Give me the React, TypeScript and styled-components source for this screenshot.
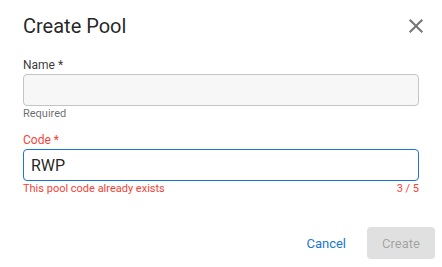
import React from "react";
import styled, { createGlobalStyle } from "styled-components";

const Global = createGlobalStyle`
  html, body { margin: 0; padding: 0; background: #ffffff; }
  body { font-family: Roboto, "Liberation Sans", Arial, sans-serif; }
  * { box-sizing: border-box; }
`;

const Dialog = styled.div`
  width: 442px;
  height: 267px;
  display: flex;
  flex-direction: column;
  background: #ffffff;
`;

const Header = styled.div`
  display: flex;
  align-items: center;
  justify-content: space-between;
  padding: 14px 14px 0 23px;
`;

const Title = styled.h2`
  margin: 0;
  font-size: 20px;
  line-height: 24px;
  font-weight: 400;
  color: rgba(0, 0, 0, 0.87);
`;

const CloseButton = styled.button`
  width: 24px;
  height: 24px;
  padding: 0;
  border: none;
  background: none;
  display: flex;
  align-items: center;
  justify-content: center;
  color: #757575;
  cursor: pointer;
`;

const Body = styled.div`
  display: flex;
  flex-direction: column;
  padding: 19px 23px 0 23px;
`;

const Field = styled.div<{ $gap?: number }>`
  display: flex;
  flex-direction: column;
  margin-top: ${(p) => p.$gap ?? 0}px;
`;

const Label = styled.label<{ $error?: boolean }>`
  font-size: 12px;
  line-height: 16px;
  color: ${(p) => (p.$error ? "#f44336" : "rgba(0,0,0,0.8)")};
  margin-bottom: 1px;
`;

const Input = styled.div<{ $focused?: boolean }>`
  height: 32px;
  border-radius: 4px;
  border: ${(p) => (p.$focused ? "1.5px solid #1976d2" : "1px solid #c4c4c4")};
  background: ${(p) => (p.$focused ? "#ffffff" : "#f7f7f7")};
  display: flex;
  align-items: center;
  padding: 0 7px;
  font-size: 16px;
  color: rgba(0, 0, 0, 0.87);
`;

const HelperRow = styled.div<{ $error?: boolean }>`
  display: flex;
  justify-content: space-between;
  font-size: 11px;
  line-height: 14px;
  margin-top: 1px;
  color: ${(p) => (p.$error ? "#f44336" : "rgba(0,0,0,0.6)")};
`;

const Footer = styled.div`
  margin-top: auto;
  display: flex;
  justify-content: flex-end;
  align-items: center;
  gap: 21px;
  padding: 0 7px 8px 0;
`;

const TextButton = styled.button`
  border: none;
  background: none;
  padding: 0;
  font-family: inherit;
  font-size: 13px;
  color: #1976d2;
  cursor: pointer;
`;

const SolidButton = styled.button`
  width: 68px;
  height: 32px;
  border: none;
  border-radius: 4px;
  background: #e0e0e0;
  color: rgba(0, 0, 0, 0.3);
  font-family: inherit;
  font-size: 13px;
`;

export default function App() {
  return (
    <>
      <Global />
      <Dialog>
        <Header>
          <Title>Create Pool</Title>
          <CloseButton aria-label="close">
            <svg width="24" height="24" viewBox="0 0 24 24" fill="currentColor">
              <path d="M19 6.41 17.59 5 12 10.59 6.41 5 5 6.41 10.59 12 5 17.59 6.41 19 12 13.41 17.59 19 19 17.59 13.41 12z" />
            </svg>
          </CloseButton>
        </Header>
        <Body>
          <Field>
            <Label>Name *</Label>
            <Input />
            <HelperRow>
              <span>Required</span>
            </HelperRow>
          </Field>
          <Field $gap={11}>
            <Label $error>Code *</Label>
            <Input $focused>RWP</Input>
            <HelperRow $error>
              <span>This pool code already exists</span>
              <span>3 / 5</span>
            </HelperRow>
          </Field>
        </Body>
        <Footer>
          <TextButton>Cancel</TextButton>
          <SolidButton disabled>Create</SolidButton>
        </Footer>
      </Dialog>
    </>
  );
}
